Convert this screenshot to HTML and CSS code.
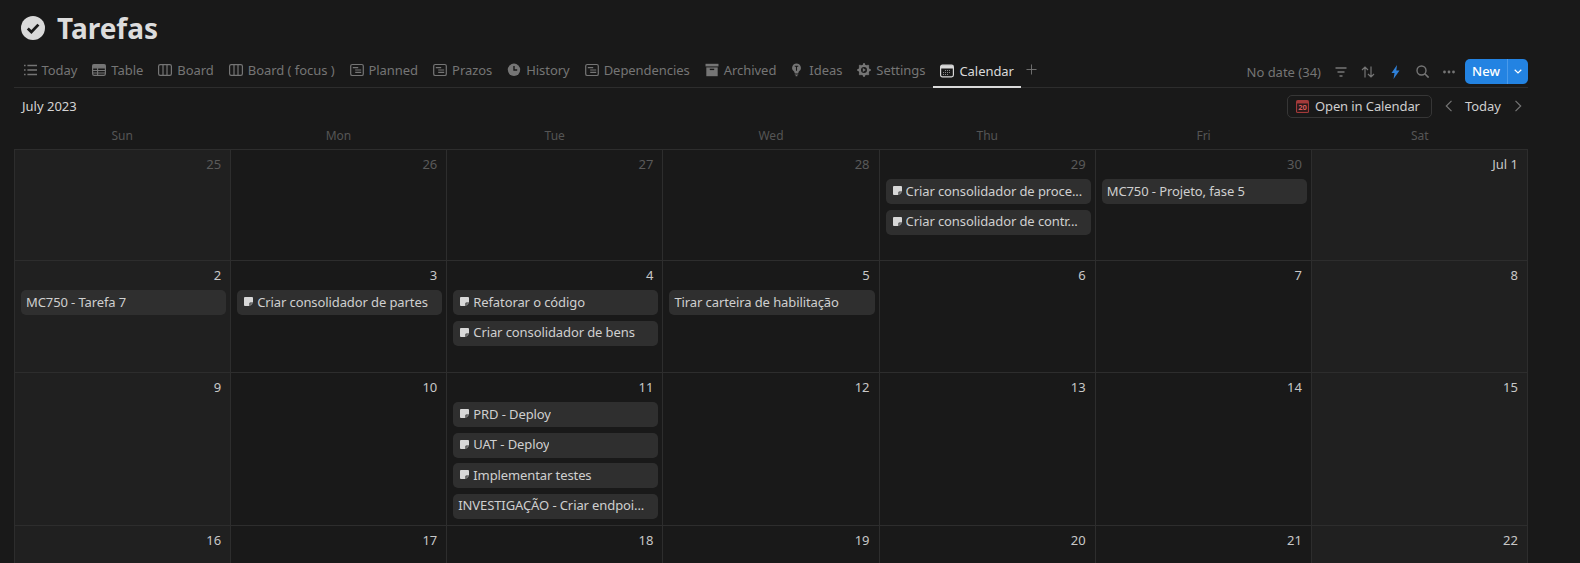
FILE: index.html
```html
<!DOCTYPE html>
<html lang="pt">
<head>
<meta charset="utf-8">
<title>Tarefas</title>
<link rel="stylesheet" href="styles.css">
</head>
<body>
<svg class="defs" width="0" height="0" aria-hidden="true">
  <symbol id="timeline" viewBox="0 0 14 14"><rect x=".7" y="1.500" width="12.600" height="11" rx="1.600" fill="none" stroke="currentColor" stroke-width="1.200"/><path d="M2.800 4.600h5.400M5.200 7h6M5.200 9.400h6" stroke="currentColor" stroke-width="1.100"/></symbol>
  <symbol id="note" viewBox="0 0 10 10"><path d="M0 1a1 1 0 0 1 1-1h8a1 1 0 0 1 1 1v5H7a1 1 0 0 0-1 1v3H1a1 1 0 0 1-1-1z" fill="#d8d8d8"/><path d="M7 7h3l-3 3z" fill="#8f8f8f"/></symbol>
</svg>
<main class="page">
  <header class="title">
    <svg class="title-icon" viewBox="0 0 24 24"><circle cx="12" cy="12" r="12" fill="#d9d9d9"/><path d="M6.800 12.400l3.600 3.600 7-7.400" fill="none" stroke="#191919" stroke-width="2.800"/></svg>
    <h1>Tarefas</h1>
  </header>

  <nav class="tabs">
    <a class="tab"><svg class="ti" viewBox="0 0 14 14"><path d="M1 2.500h1.600M1 7h1.600M1 11.500h1.600" stroke="currentColor" stroke-width="1.600"/><path d="M4.400 2.500H14M4.400 7H14M4.400 11.500H14" stroke="currentColor" stroke-width="1.500"/></svg>Today</a>
    <a class="tab"><svg class="ti" viewBox="0 0 14 14"><rect x=".6" y="1.600" width="12.800" height="10.800" rx="1.600" fill="none" stroke="currentColor" stroke-width="1.200"/><path d="M.6 4.900h12.800M.6 7.500h12.800M.6 10h12.800M5.600 4.900v7.500" stroke="currentColor" stroke-width="1.100"/><rect x=".6" y="1.600" width="12.800" height="3.300" fill="currentColor"/></svg>Table</a>
    <a class="tab"><svg class="ti" viewBox="0 0 14 14"><rect x=".6" y="1.600" width="12.800" height="10.800" rx="1.600" fill="none" stroke="currentColor" stroke-width="1.200"/><path d="M5 1.600v10.800M9 1.600v10.800" stroke="currentColor" stroke-width="1.200"/></svg>Board</a>
    <a class="tab"><svg class="ti" viewBox="0 0 14 14"><rect x=".6" y="1.600" width="12.800" height="10.800" rx="1.600" fill="none" stroke="currentColor" stroke-width="1.200"/><path d="M5 1.600v10.800M9 1.600v10.800" stroke="currentColor" stroke-width="1.200"/></svg>Board ( focus )</a>
    <a class="tab"><svg class="ti"><use href="#timeline"/></svg>Planned</a>
    <a class="tab"><svg class="ti"><use href="#timeline"/></svg>Prazos</a>
    <a class="tab"><svg class="ti" viewBox="0 0 14 14"><circle cx="7" cy="6.800" r="6.200" fill="currentColor"/><path d="M7 3v4h3.200" fill="none" stroke="#191919" stroke-width="1.400"/></svg>History</a>
    <a class="tab"><svg class="ti"><use href="#timeline"/></svg>Dependencies</a>
    <a class="tab"><svg class="ti" viewBox="0 0 14 14"><path d="M.5 .8h13v2.600H.5z" fill="currentColor"/><path d="M1.300 4.400h11.400v8.800H1.300z" fill="currentColor"/><path d="M4.800 6.400h4.400" stroke="#191919" stroke-width="1.400"/></svg>Archived</a>
    <a class="tab tab-ideas"><svg class="ti ti-bulb" viewBox="0 0 12 16"><path d="M6 .5a5 5 0 0 0-3 9c.6.5.8 1 .8 1.800h4.400c0-.8.2-1.300.8-1.800a5 5 0 0 0-3-9z" fill="currentColor"/><path d="M4 3.800h4M6 3.800v5" stroke="#191919" stroke-width="1.200"/><path d="M4 12.600h4M5 14.500h2" stroke="currentColor" stroke-width="1.300"/></svg>Ideas</a>
    <a class="tab"><svg class="ti" viewBox="0 0 14 14"><circle cx="7" cy="7" r="4.300" fill="none" stroke="currentColor" stroke-width="2.600"/><path d="M7 .3v2M7 11.700v2M.3 7h2M11.700 7h2M2.300 2.300l1.400 1.400M10.300 10.300l1.400 1.400M2.300 11.700l1.400-1.400M10.300 3.700l1.400-1.400" stroke="currentColor" stroke-width="2"/><path d="M5.800 4.900l3 2.100-3 2.100z" fill="currentColor"/></svg>Settings</a>
    <a class="tab tab-active"><svg class="ti" viewBox="0 0 14 14"><rect x=".6" y="1.200" width="12.800" height="11.600" rx="1.800" fill="#191919" stroke="#d8d8d8" stroke-width="1.200"/><path d="M.6 3.200a2 2 0 0 1 2-2h8.800a2 2 0 0 1 2 2v1.300H.6z" fill="#d8d8d8"/><path d="M5 6.500h6M3 8.500h8M3 10.500h6" stroke="#8a8a8a" stroke-width="1.100" stroke-dasharray="1 1"/></svg>Calendar</a>
    <svg class="add" viewBox="0 0 12 12"><path d="M6 .5v11M.5 6h11" stroke="currentColor" stroke-width="1"/></svg>
    <div class="tools">
      <span class="nodate">No date (34)</span>
      <svg class="tool" viewBox="0 0 12 12"><path d="M.5 2h11M2.500 6h7M4.500 10h3" stroke="currentColor" stroke-width="1.300"/></svg>
      <svg class="tool sort" viewBox="0 0 14 12"><path d="M4 11.500V1M1 4l3-3 3 3M10 .5V11M7 8l3 3 3-3" fill="none" stroke="currentColor" stroke-width="1.200"/></svg>
      <svg class="tool bolt" viewBox="0 0 9 14"><path d="M6 0L.5 8h3L2.500 14 8.500 5.500h-3.200z" fill="#2f80d8"/></svg>
      <svg class="tool search" viewBox="0 0 13 13"><circle cx="5.500" cy="5.500" r="4.500" fill="none" stroke="currentColor" stroke-width="1.400"/><path d="M8.800 8.800L12.600 12.600" stroke="currentColor" stroke-width="1.600"/></svg>
      <svg class="tool dots" viewBox="0 0 12 4"><circle cx="1.500" cy="2" r="1.400" fill="currentColor"/><circle cx="6" cy="2" r="1.400" fill="currentColor"/><circle cx="10.500" cy="2" r="1.400" fill="currentColor"/></svg>
      <div class="new"><span class="new-label">New</span><span class="new-caret"><svg viewBox="0 0 8 5" width="8" height="5"><path d="M.7 .8L4 4l3.300-3.200" fill="none" stroke="#fff" stroke-width="1.200"/></svg></span></div>
    </div>
  </nav>

  <div class="toolbar">
    <span class="month">July 2023</span>
    <div class="cal-nav">
      <a class="open-cal"><svg class="cal-red" viewBox="0 0 12 12"><rect width="12" height="12" rx="1.500" fill="#a33a3a"/><rect x="1" y="3.200" width="10" height="7.800" fill="#2a1a1a"/><text x="6" y="9.600" text-anchor="middle" class="cal-num">20</text></svg>Open in Calendar</a>
      <svg class="chev" viewBox="0 0 8 12"><path d="M6.500 .8L1.300 6l5.200 5.200" fill="none" stroke="currentColor" stroke-width="1.200"/></svg>
      <span class="today">Today</span>
      <svg class="chev chev-next" viewBox="0 0 8 12"><path d="M1.500 .8L6.700 6l-5.200 5.200" fill="none" stroke="currentColor" stroke-width="1.200"/></svg>
    </div>
  </div>

  <div class="weekdays"><span>Sun</span><span>Mon</span><span>Tue</span><span>Wed</span><span>Thu</span><span>Fri</span><span>Sat</span></div>

  <section class="grid">
    <div class="cell weekend"><div class="day muted">25</div></div>
    <div class="cell"><div class="day muted">26</div></div>
    <div class="cell"><div class="day muted">27</div></div>
    <div class="cell"><div class="day muted">28</div></div>
    <div class="cell"><div class="day muted">29</div>
      <div class="ev"><svg class="note"><use href="#note"/></svg><span>Criar consolidador de proce...</span></div>
      <div class="ev"><svg class="note"><use href="#note"/></svg><span>Criar consolidador de contr...</span></div>
    </div>
    <div class="cell"><div class="day muted">30</div>
      <div class="ev"><span>MC750 - Projeto, fase 5</span></div>
    </div>
    <div class="cell weekend"><div class="day">Jul 1</div></div>

    <div class="cell weekend"><div class="day">2</div>
      <div class="ev"><span>MC750 - Tarefa 7</span></div>
    </div>
    <div class="cell"><div class="day">3</div>
      <div class="ev"><svg class="note"><use href="#note"/></svg><span>Criar consolidador de partes</span></div>
    </div>
    <div class="cell"><div class="day">4</div>
      <div class="ev"><svg class="note"><use href="#note"/></svg><span>Refatorar o código</span></div>
      <div class="ev"><svg class="note"><use href="#note"/></svg><span>Criar consolidador de bens</span></div>
    </div>
    <div class="cell"><div class="day">5</div>
      <div class="ev"><span>Tirar carteira de habilitação</span></div>
    </div>
    <div class="cell"><div class="day">6</div></div>
    <div class="cell"><div class="day">7</div></div>
    <div class="cell weekend"><div class="day">8</div></div>

    <div class="cell weekend"><div class="day">9</div></div>
    <div class="cell"><div class="day">10</div></div>
    <div class="cell"><div class="day">11</div>
      <div class="ev"><svg class="note"><use href="#note"/></svg><span>PRD - Deploy</span></div>
      <div class="ev"><svg class="note"><use href="#note"/></svg><span>UAT - Deploy</span></div>
      <div class="ev"><svg class="note"><use href="#note"/></svg><span>Implementar testes</span></div>
      <div class="ev"><span>INVESTIGAÇÃO - Criar endpoi...</span></div>
    </div>
    <div class="cell"><div class="day">12</div></div>
    <div class="cell"><div class="day">13</div></div>
    <div class="cell"><div class="day">14</div></div>
    <div class="cell weekend"><div class="day">15</div></div>

    <div class="cell weekend"><div class="day">16</div></div>
    <div class="cell"><div class="day">17</div></div>
    <div class="cell"><div class="day">18</div></div>
    <div class="cell"><div class="day">19</div></div>
    <div class="cell"><div class="day">20</div></div>
    <div class="cell"><div class="day">21</div></div>
    <div class="cell weekend"><div class="day">22</div></div>
  </section>
</main>
</body>
</html>
```
FILE: styles.css
```css
* { box-sizing: border-box; }
html, body { margin: 0; height: 100%; overflow: hidden; }
body {
  background: #191919;
  color: #d4d4d4;
  font-family: "Noto Sans", "Open Sans", sans-serif;
  font-size: 13px;
}
a { color: inherit; text-decoration: none; }
.defs { position: absolute; }
.page { padding: 0 52px 0 14px; }

.title { display: flex; align-items: center; gap: 12px; height: 57px; padding: 0 0 1px 7px; }
.title-icon { width: 24px; height: 24px; }
h1 { margin: 0; font-size: 28px; font-weight: 700; color: #dcdcdc; line-height: 1; }

.tabs { display: flex; align-items: stretch; height: 31px; padding-left: 1px; border-bottom: 1px solid #2d2d2d; color: #757575; }
.tab { display: flex; align-items: center; gap: 5px; padding: 0 7.5px 4px; white-space: nowrap; margin-bottom: -1px; border-bottom: 2px solid transparent; letter-spacing: -.05px; }
.ti { width: 14px; height: 14px; flex: none; }
.ti-bulb { width: 11px; }
.tab-ideas { gap: 7px; }
.tab-active { padding-bottom: 2px; color: #dadada; border-bottom-color: #dadada; }
.add { width: 11px; height: 11px; margin: 7px 0 0 5px; color: #757575; }

.tools { margin-left: auto; display: flex; align-items: center; color: #757575; padding-bottom: 1px; }
.nodate { margin-right: 14px; }
.tool { width: 12px; height: 12px; margin-right: 14px; flex: none; }
.sort { width: 14px; margin-right: 16px; }
.bolt { width: 9px; height: 14px; margin-right: 16px; }
.search { width: 13px; height: 13px; margin-right: 14px; }
.dots { width: 12px; height: 4px; margin-right: 10px; }
.new { display: flex; height: 25px; width: 63px; border-radius: 5px; background: #2383e2; color: #fff; align-items: center; }
.new-label { width: 43px; text-align: center; line-height: 25px; border-right: 1px solid #4a9aea; font-weight: 500; }
.new-caret { flex: 1; display: flex; justify-content: center; align-items: center; }

.toolbar { display: flex; align-items: center; justify-content: space-between; height: 36px; padding-left: 8px; }
.month { color: #d4d4d4; font-size: 13px; }
.cal-nav { display: flex; align-items: center; color: #cfcfcf; padding-right: 6px; }
.open-cal { display: flex; align-items: center; gap: 6px; height: 23px; padding: 0 11px 0 8px; border: 1px solid #363636; border-radius: 5px; letter-spacing: -.1px; }
.cal-red { width: 13px; height: 13px; }
.cal-num { font-size: 7px; fill: #d65a5a; font-family: "Noto Sans", sans-serif; font-weight: 700; }
.chev { width: 8px; height: 12px; color: #757575; margin-left: 13px; }
.chev-next { margin-left: 13px; }
.today { margin-left: 12px; }

.weekdays { display: grid; grid-template-columns: repeat(7, 1fr); height: 25px; padding-bottom: 3px; align-items: center; text-align: center; color: #555; font-size: 12px; }

.grid { display: grid; grid-template-columns: repeat(7, 1fr); grid-template-rows: 111px 112px auto 112px; border-top: 1px solid #2d2d2d; border-left: 1px solid #2d2d2d; }
.cell { padding: 6px 4px 0 6px; border-right: 1px solid #2d2d2d; border-bottom: 1px solid #2d2d2d; min-width: 0; }
.weekend { background: #202020; }
.day { height: 23px; text-align: right; padding-right: 5px; color: #c8c8c8; font-size: 13px; line-height: 16px; }
.muted { color: #5a5a5a; }
.ev { display: flex; align-items: center; gap: 4px; height: 25px; margin-bottom: 5.67px; padding: 0 5px 2px 7px; background: #2f2f2f; border-radius: 5px; color: #cfcfcf; letter-spacing: -.1px; }
.ev > span:only-child { margin-left: -2px; }
.ev span { overflow: hidden; white-space: nowrap; min-width: 0; }
.note { width: 9px; height: 9px; flex: none; }
```
